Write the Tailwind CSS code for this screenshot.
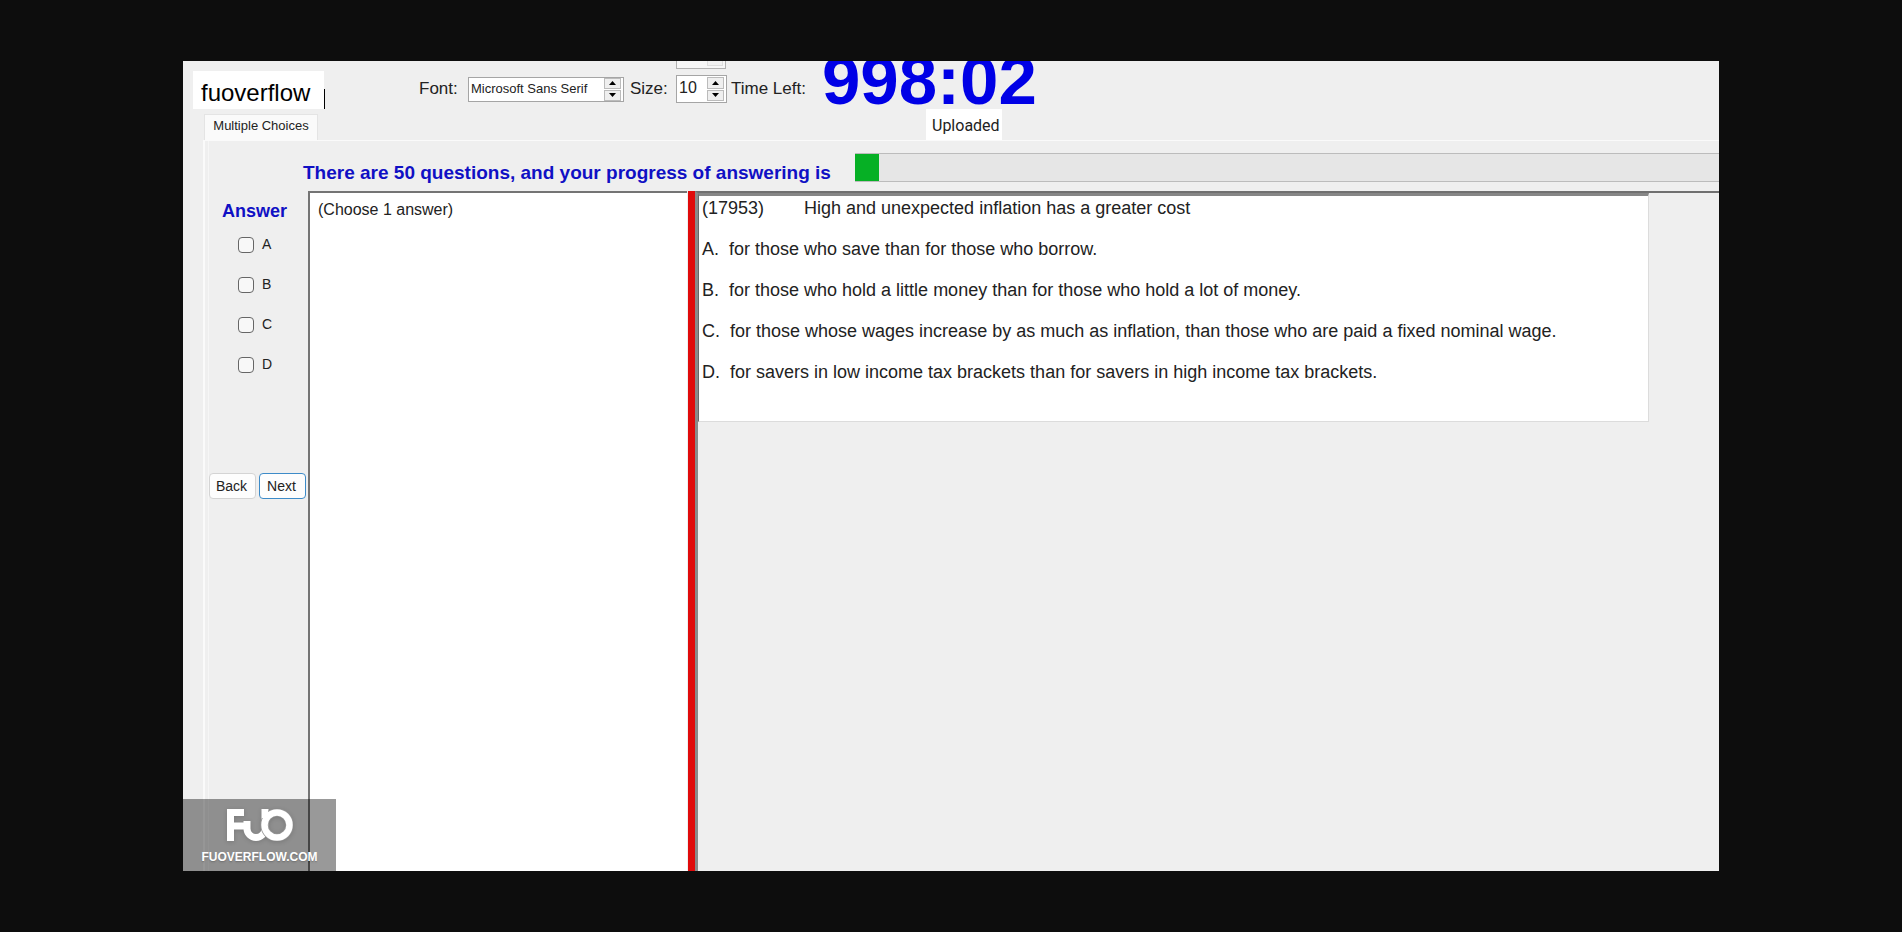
<!DOCTYPE html>
<html lang="en">
<head>
<meta charset="utf-8">
<title>Multiple Choices</title>
<script src="https://cdn.jsdelivr.net/npm/@tailwindcss/browser@4"></script>
</head>
<body class="flex min-h-screen bg-[#0d0d0d] px-[183px] py-[61px] font-['Liberation_Sans',Arial,sans-serif] text-[#222]">
<main class="relative flex min-w-0 flex-1 flex-col overflow-hidden bg-[#efefef]">

  <!-- Toolbar -->
  <header class="flex h-12 items-start pl-2.5">
    <div class="mt-2.5 flex h-[38px] w-[131px] items-center bg-white pt-1.5 pl-2 text-2xl text-black">fuoverflow</div>
    <div class="mt-7 h-5 w-px bg-black"></div>
    <div class="ml-[94px] flex h-14 items-center text-[17px]">
      <label for="font" class="w-[49px]">Font:</label>
      <div class="flex h-[25px] w-[156px] border border-[#a5a5a5] bg-white">
        <input id="font" value="Microsoft Sans Serif" class="min-w-0 flex-1 pl-0.5 text-[13px] outline-none">
        <div class="flex w-[19px] flex-col gap-px pr-0.5">
          <button aria-label="Next font" class="flex flex-1 items-center justify-center border border-[#bbb] bg-[#efefef]"><svg class="h-1 w-[7px]" viewBox="0 0 7 4"><path d="M0 4 3.500 0 7 4z"/></svg></button>
          <button aria-label="Previous font" class="flex flex-1 items-center justify-center border border-[#bbb] bg-[#efefef]"><svg class="h-1 w-[7px]" viewBox="0 0 7 4"><path d="M0 0h7L3.500 4z"/></svg></button>
        </div>
      </div>
      <label for="size" class="ml-1.5 w-[46px]">Size:</label>
      <div class="relative">
        <div class="absolute -top-9 left-0 flex h-[30px] w-[50px] justify-end border border-[#b0b0b0] bg-[#f6f6f6] p-0.5">
          <div class="flex w-4 items-end justify-center border border-[#ddd] bg-[#f0f0f0] pb-1"><svg class="h-1 w-[7px]" viewBox="0 0 7 4"><path fill="#999" d="M0 0h7L3.500 4z"/></svg></div>
        </div>
        <div class="flex h-7 w-[51px] border border-[#a5a5a5] bg-white">
          <input id="size" value="10" class="min-w-0 flex-1 pb-0.5 pl-0.5 text-base outline-none">
          <div class="flex w-[19px] flex-col gap-px py-px pr-0.5">
            <button aria-label="Larger" class="flex flex-1 items-center justify-center border border-[#bbb] bg-[#efefef]"><svg class="h-1 w-[7px]" viewBox="0 0 7 4"><path d="M0 4 3.500 0 7 4z"/></svg></button>
            <button aria-label="Smaller" class="flex flex-1 items-center justify-center border border-[#bbb] bg-[#efefef]"><svg class="h-1 w-[7px]" viewBox="0 0 7 4"><path d="M0 0h7L3.500 4z"/></svg></button>
          </div>
        </div>
      </div>
      <span class="ml-1 w-[91px] whitespace-nowrap">Time Left:</span>
      <span class="self-start text-[69px] leading-10 font-bold text-[#0000e6]">998:02</span>
    </div>
  </header>

  <!-- Tab strip -->
  <div class="flex h-[31px] items-end pl-[21px]">
    <button class="h-[26px] w-[114px] border border-b-0 border-[#e4e4e4] bg-[#fafafa] pb-1 text-[13px] whitespace-nowrap">Multiple Choices</button>
    <div class="ml-[608px] flex h-[31px] w-[76px] items-center bg-white pt-0.5 pl-1.5 font-[Roboto,sans-serif] text-base">Uploaded</div>
  </div>

  <!-- Tab page -->
  <section class="ml-5 flex flex-1 flex-col border-t border-l-2 border-t-[#fafafa] border-l-[#fafafa]">
    <div class="ml-[3px] flex flex-1 flex-col border-l border-[#f6f6f6]">
      <div class="flex h-[50px] items-start pt-3 pl-[94px]">
        <p class="mt-2 w-[552px] text-[19px] leading-6 font-bold whitespace-nowrap text-[#1010c4]">There are 50 questions, and your progress of answering is</p>
        <div role="progressbar" aria-label="Answering progress" aria-valuenow="1" aria-valuemax="50" class="h-[29px] flex-1 border-y border-[#bcbcbc] bg-[#e6e6e6]">
          <div class="h-full w-6 bg-[#06b025]"></div>
        </div>
      </div>

      <div class="flex flex-1">
        <aside class="flex w-[99px] flex-col">
          <h2 class="mt-2 pl-[13px] text-lg leading-6 font-bold text-[#1010c4]">Answer</h2>
          <div class="mt-2.5 flex flex-col pl-[29px] text-sm">
            <label class="flex h-10 items-start gap-2 leading-[22px]"><input type="checkbox" class="mt-1 size-4 appearance-none rounded-sm border border-[#666] bg-[#f8f8f8]">A</label>
            <label class="flex h-10 items-start gap-2 leading-[22px]"><input type="checkbox" class="mt-1 size-4 appearance-none rounded-sm border border-[#666] bg-[#f8f8f8]">B</label>
            <label class="flex h-10 items-start gap-2 leading-[22px]"><input type="checkbox" class="mt-1 size-4 appearance-none rounded-sm border border-[#666] bg-[#f8f8f8]">C</label>
            <label class="flex h-10 items-start gap-2 leading-[22px]"><input type="checkbox" class="mt-1 size-4 appearance-none rounded-sm border border-[#666] bg-[#f8f8f8]">D</label>
          </div>
          <div class="mt-20 flex gap-[3px] text-sm">
            <button class="h-[26px] w-[47px] rounded border border-[#d4d4d4] bg-[#fdfdfd] pr-0.5">Back</button>
            <button class="h-[26px] w-[47px] rounded border border-[#3d8bc8] bg-[#fdfdfd] pr-0.5">Next</button>
          </div>
        </aside>

        <div class="w-[379px] border-t-2 border-l-2 border-[#747474] bg-white pt-[7px] pl-2 text-base leading-5">(Choose 1 answer)</div>
        <div class="ml-px w-[7px] bg-[#e00b0b]"></div>

        <div class="min-w-0 flex-1 border-t-2 border-l-3 border-t-[#707070] border-l-[#8a8a8a]">
          <article class="mr-[70px] h-[229px] border-t-3 border-r border-b border-l border-t-[#868686] border-r-[#dcdcdc] border-b-[#dcdcdc] border-l-[#696969] bg-white pl-[3px] text-lg leading-[41px]">
            <div class="-mt-2 flex"><span class="w-[102px]">(17953)</span><h1>High and unexpected inflation has a greater cost</h1></div>
            <p class="whitespace-pre">A.  for those who save than for those who borrow.</p>
            <p class="whitespace-pre">B.  for those who hold a little money than for those who hold a lot of money.</p>
            <p class="whitespace-pre">C.  for those whose wages increase by as much as inflation, than those who are paid a fixed nominal wage.</p>
            <p class="whitespace-pre">D.  for savers in low income tax brackets than for savers in high income tax brackets.</p>
          </article>
        </div>
      </div>
    </div>
  </section>

  <!-- Watermark -->
  <div class="absolute bottom-0 left-0 flex h-[72px] w-[153px] flex-col items-center bg-black/40 pt-2.5 text-white">
    <svg class="h-8 w-[66px] drop-shadow-sm" viewBox="0 0 66 32" fill="none" stroke="#fff" stroke-width="7">
      <path d="M3.500 32V3.500H17M3.500 17H20"/>
      <path d="M20 12V19.500A9 9 0 0 0 38 19.500V0"/>
      <circle cx="50" cy="16" r="12.500" stroke="#949494" stroke-width="8.200"/>
      <path d="M38 9V0" stroke-width="6"/>
      <circle cx="50" cy="16" r="12.500" stroke-width="6.500"/>
    </svg>
    <span class="mt-1.5 text-xs leading-5 font-bold text-shadow-sm">FUOVERFLOW.COM</span>
  </div>
</main>
</body>
</html>
